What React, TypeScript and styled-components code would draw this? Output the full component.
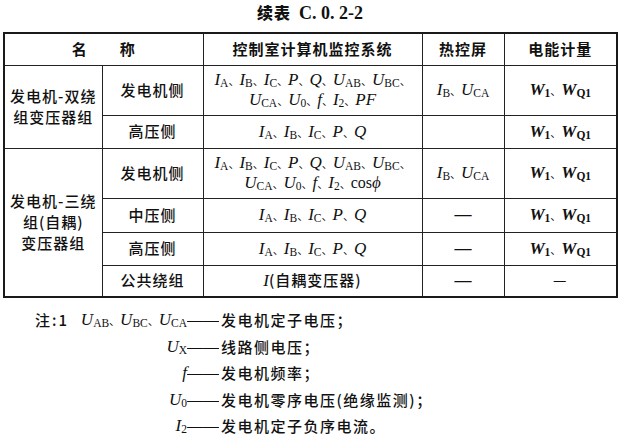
import React from "react";
import styled, { createGlobalStyle } from "styled-components";

const Global = createGlobalStyle`
  html, body { margin: 0; padding: 0; background: #fff; }
`;

const Page = styled.div`
  width: 620px;
  height: 438px;
  overflow: hidden;
  background: #fff;
  color: #111;
  font-family: "Liberation Serif", "Noto Sans CJK SC", serif;
`;

const Title = styled.h1`
  margin: 0;
  height: 24px;
  line-height: 24px;
  text-align: center;
  font-size: 18px;
  font-weight: bold;
`;

const TitleCn = styled.span`
  font-family: "Noto Sans CJK SC", sans-serif;
  font-size: 16px;
  font-weight: 900;
  letter-spacing: 1px;
  margin-right: 8px;
`;

const Table = styled.table`
  margin: 8px 0 0 3px;
  width: 613px;
  border-collapse: collapse;
  table-layout: fixed;
  border: 2px solid #1a1a1a;
`;

const Row = styled.tr<{ $h: number }>`
  height: ${(p) => p.$h}px;
`;

const Cell = styled.td`
  padding: 0;
  text-align: center;
  vertical-align: middle;
  border: 1px solid #222;
  font-size: 15px;
  line-height: 19px;
  white-space: nowrap;
`;

const Cn = styled.span<{ $w?: number }>`
  font-family: "Noto Sans CJK SC", sans-serif;
  font-weight: ${(p) => p.$w ?? 500};
  letter-spacing: 1px;
`;

const Sep = styled.span`
  font-family: "Noto Sans CJK SC", sans-serif;
  font-size: 11px;
`;

const Var = styled.i<{ $bold?: boolean }>`
  font-family: "Liberation Serif", serif;
  font-style: italic;
  font-size: 17px;
  font-weight: ${(p) => (p.$bold ? "bold" : "normal")};
`;

const Sub = styled.sub<{ $bold?: boolean }>`
  font-style: normal;
  font-size: 11.5px;
  line-height: 0;
  vertical-align: -2px;
  font-weight: ${(p) => (p.$bold ? "bold" : "normal")};
`;

const Upright = styled.span`
  font-size: 16px;
`;

const Dash = styled.span`
  font-family: "Liberation Serif", serif;
  font-weight: bold;
  font-size: 17px;
`;

const Notes = styled.div`
  margin-top: 9px;
  padding-left: 35px;
  display: grid;
  grid-template-columns: 45px 107px 32px auto;
  line-height: 25.5px;
  font-size: 15px;
`;

const NotePrefix = styled.span`
  font-family: "Noto Sans CJK SC", sans-serif;
  font-weight: 500;
  letter-spacing: 2px;
  white-space: nowrap;
`;

const NoteTerm = styled.span`
  text-align: right;
  white-space: nowrap;
`;

const NoteDash = styled.span`
  font-family: "Liberation Serif", serif;
  font-size: 16px;
  white-space: nowrap;
  overflow: hidden;
`;

const NoteText = styled.span`
  font-family: "Noto Sans CJK SC", sans-serif;
  font-weight: 500;
  letter-spacing: 1.5px;
  margin-left: 2px;
  white-space: nowrap;
`;

const V = ({ n, s, b }: { n: string; s?: string; b?: boolean }) => (
  <>
    <Var $bold={b}>{n}</Var>
    {s ? <Sub $bold={b}>{s}</Sub> : null}
  </>
);

const S = () => <Sep>、</Sep>;

const IABC = () => (
  <>
    <V n="I" s="A" />
    <S />
    <V n="I" s="B" />
    <S />
    <V n="I" s="C" />
    <S />
    <V n="P" />
    <S />
    <V n="Q" />
  </>
);

const Full = ({ last }: { last: React.ReactNode }) => (
  <>
    <IABC />
    <S />
    <V n="U" s="AB" />
    <S />
    <V n="U" s="BC" />
    <S />
    <br />
    <V n="U" s="CA" />
    <S />
    <V n="U" s="0" />
    <S />
    <V n="f" />
    <S />
    <V n="I" s="2" />
    <S />
    {last}
  </>
);

const Meter = () => (
  <>
    <V n="W" s="1" b />
    <S />
    <V n="W" s="Q1" b />
  </>
);

const Screen = () => (
  <>
    <V n="I" s="B" />
    <S />
    <V n="U" s="CA" />
  </>
);

export default function App() {
  return (
    <Page>
      <Global />
      <Title>
        <TitleCn>续表</TitleCn>C. 0. 2-2
      </Title>
      <Table>
        <colgroup>
          <col style={{ width: 98 }} />
          <col style={{ width: 101 }} />
          <col style={{ width: 219 }} />
          <col style={{ width: 82 }} />
          <col style={{ width: 113 }} />
        </colgroup>
        <tbody>
          <Row $h={32}>
            <Cell colSpan={2}>
              <Cn $w={700}>名　　称</Cn>
            </Cell>
            <Cell>
              <Cn $w={700}>控制室计算机监控系统</Cn>
            </Cell>
            <Cell>
              <Cn $w={700}>热控屏</Cn>
            </Cell>
            <Cell>
              <Cn $w={700}>电能计量</Cn>
            </Cell>
          </Row>
          <Row $h={50}>
            <Cell rowSpan={2}>
              <Cn>
                发电机-双绕
                <br />
                组变压器组
              </Cn>
            </Cell>
            <Cell>
              <Cn>发电机侧</Cn>
            </Cell>
            <Cell>
              <Full last={<V n="PF" />} />
            </Cell>
            <Cell>
              <Screen />
            </Cell>
            <Cell>
              <Meter />
            </Cell>
          </Row>
          <Row $h={33}>
            <Cell>
              <Cn>高压侧</Cn>
            </Cell>
            <Cell>
              <IABC />
            </Cell>
            <Cell />
            <Cell>
              <Meter />
            </Cell>
          </Row>
          <Row $h={50}>
            <Cell rowSpan={4}>
              <Cn>
                发电机-三绕
                <br />
                组(自耦)
                <br />
                变压器组
              </Cn>
            </Cell>
            <Cell>
              <Cn>发电机侧</Cn>
            </Cell>
            <Cell>
              <Full
                last={
                  <Upright>
                    cos<Var>ϕ</Var>
                  </Upright>
                }
              />
            </Cell>
            <Cell>
              <Screen />
            </Cell>
            <Cell>
              <Meter />
            </Cell>
          </Row>
          <Row $h={34}>
            <Cell>
              <Cn>中压侧</Cn>
            </Cell>
            <Cell>
              <IABC />
            </Cell>
            <Cell>
              <Dash>—</Dash>
            </Cell>
            <Cell>
              <Meter />
            </Cell>
          </Row>
          <Row $h={33}>
            <Cell>
              <Cn>高压侧</Cn>
            </Cell>
            <Cell>
              <IABC />
            </Cell>
            <Cell>
              <Dash>—</Dash>
            </Cell>
            <Cell>
              <Meter />
            </Cell>
          </Row>
          <Row $h={32}>
            <Cell>
              <Cn>公共绕组</Cn>
            </Cell>
            <Cell>
              <V n="I" />
              <Cn>(自耦变压器)</Cn>
            </Cell>
            <Cell>
              <Dash>—</Dash>
            </Cell>
            <Cell>
              <Cn $w={400}>—</Cn>
            </Cell>
          </Row>
        </tbody>
      </Table>
      <Notes>
        <NotePrefix>注:1</NotePrefix>
        <NoteTerm>
          <V n="U" s="AB" />
          <S />
          <V n="U" s="BC" />
          <S />
          <V n="U" s="CA" />
        </NoteTerm>
        <NoteDash>——</NoteDash>
        <NoteText>发电机定子电压；</NoteText>

        <span />
        <NoteTerm>
          <V n="U" s="X" />
        </NoteTerm>
        <NoteDash>——</NoteDash>
        <NoteText>线路侧电压；</NoteText>

        <span />
        <NoteTerm>
          <V n="f" />
        </NoteTerm>
        <NoteDash>——</NoteDash>
        <NoteText>发电机频率；</NoteText>

        <span />
        <NoteTerm>
          <V n="U" s="0" />
        </NoteTerm>
        <NoteDash>——</NoteDash>
        <NoteText>发电机零序电压(绝缘监测)；</NoteText>

        <span />
        <NoteTerm>
          <V n="I" s="2" />
        </NoteTerm>
        <NoteDash>——</NoteDash>
        <NoteText>发电机定子负序电流。</NoteText>
      </Notes>
    </Page>
  );
}
